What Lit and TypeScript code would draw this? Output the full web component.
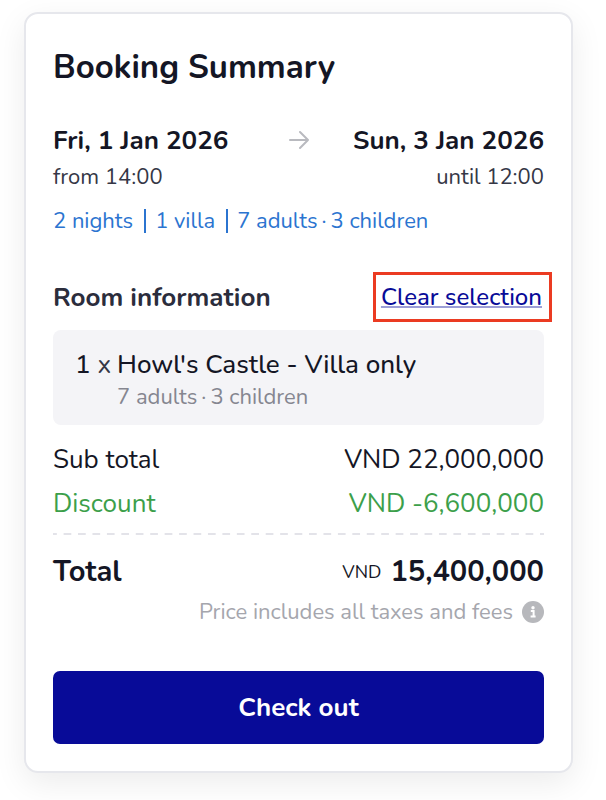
import { LitElement, html, css } from "lit";
import { customElement } from "lit/decorators.js";

@customElement("app-root")
export class AppRoot extends LitElement {
  static styles = css`
    :host {
      display: block;
      box-sizing: border-box;
      min-height: 100vh;
      padding: 12px 33px 27px 24px;
      background: #fff;
      color: #141625;
      font-family: Nunito, "Open Sans", "Noto Sans", sans-serif;
      font-size: 26px;
      line-height: 32px;
      overflow: hidden;
    }
    h1, h2, p, dl, dd, dt { margin: 0; font: inherit; }
    .card {
      padding: 28px 27px 27px;
      border: 2px solid #e6e7ec;
      border-radius: 14px;
      background: #fff;
      box-shadow: 0 10px 32px rgba(0, 0, 0, 0.08);
    }
    .card .title { font-size: 33px; font-weight: 700; line-height: 52px; margin-bottom: 29px; }
    .dates {
      display: grid;
      grid-template-columns: 1fr auto 1fr;
      align-items: start;
      line-height: 36px;
    }
    .dates .day { font-weight: 700; }
    .dates .time { font-size: 22px; color: #353746; }
    .end { text-align: right; }
    .arrow { display: block; width: 20px; height: 34px; }
    .facts {
      display: flex;
      align-items: center;
      gap: 11px;
      margin-top: 10px;
      font-size: 22px;
      color: #2b74d0;
    }
    .fact + .fact { display: flex; align-items: center; gap: 9px; }
    .fact + .fact::before { content: ""; width: 2px; height: 24px; background: currentColor; }
    .dot { margin: 0 4px; }
    .room-head {
      display: flex;
      align-items: center;
      justify-content: space-between;
      margin: 35px -8px 8px 0;
    }
    .room-head .label { padding-top: 2px; font-weight: 700; color: #2b2d3c; }
    .clear {
      height: 50px;
      padding: 0 7px 0 5px;
      border: 3px solid #eb3b22;
      background: none;
      color: #080b98;
      font: inherit;
      font-size: 24px;
      font-weight: 500;
      text-decoration: underline;
      text-decoration-color: #9c9ed6;
      text-decoration-thickness: 2px;
      text-decoration-skip-ink: none;
      text-underline-offset: 1px;
      cursor: pointer;
    }
    .room {
      display: grid;
      grid-template-columns: auto 1fr;
      column-gap: 6px;
      padding: 19px 22px 12px;
      border-radius: 8px;
      background: #f4f4f7;
    }
    .name { font-weight: 500; }
    .times { font-weight: 400; color: #353746; }
    .guests { grid-column: 2; font-size: 22px; color: #858690; }
    .prices { margin-top: 13px; }
    .row {
      display: flex;
      justify-content: space-between;
      align-items: center;
      line-height: 44px;
    }
    .discount { color: #3c9f4a; }
    .rule {
      height: 2px;
      margin: 7px 0 15px;
      background: linear-gradient(90deg, #e3e3e9 4px, transparent 4px calc(100% - 4px), #e3e3e9 calc(100% - 4px));
      background-size: calc(100% / 34) 100%;
    }
    .total { font-size: 29px; font-weight: 700; }
    .amount { display: flex; align-items: center; gap: 9px; }
    .currency { font-size: 18px; font-weight: 400; }
    .note {
      display: flex;
      align-items: center;
      justify-content: flex-end;
      gap: 9px;
      margin: 2px 0 43px;
      font-size: 22px;
      color: #a5a6ad;
    }
    .info { width: 22px; height: 22px; }
    .checkout {
      display: block;
      width: 100%;
      height: 73px;
      padding: 0;
      border: 0;
      border-radius: 7px;
      background: #080b98;
      color: #fff;
      font: inherit;
      font-weight: 700;
      cursor: pointer;
    }
  `;

  render() {
    return html`
      <main class="card">
        <h1 class="title">Booking Summary</h1>
        <section class="dates">
          <div>
            <p class="day">Fri, 1 Jan 2026</p>
            <p class="time">from 14:00</p>
          </div>
          <svg class="arrow" viewBox="0 0 20 34" fill="none" stroke="#b9babf" stroke-width="2" stroke-linecap="round" stroke-linejoin="round" aria-hidden="true">
            <path d="M1 17H19M11 9L19 17L11 25" />
          </svg>
          <div class="end">
            <p class="day">Sun, 3 Jan 2026</p>
            <p class="time">until 12:00</p>
          </div>
        </section>
        <div class="facts">
          <span class="fact">2 nights</span>
          <span class="fact">1 villa</span>
          <span class="fact"><span>7 adults<span class="dot">·</span>3 children</span></span>
        </div>
        <div class="room-head">
          <h2 class="label">Room information</h2>
          <button class="clear" type="button">Clear selection</button>
        </div>
        <section class="room">
          <span class="name">1 <span class="times">x</span></span>
          <span class="name">Howl's Castle - Villa only</span>
          <span class="guests">7 adults<span class="dot">·</span>3 children</span>
        </section>
        <dl class="prices">
          <div class="row"><dt>Sub total</dt><dd>VND 22,000,000</dd></div>
          <div class="row discount"><dt>Discount</dt><dd>VND -6,600,000</dd></div>
          <div class="rule"></div>
          <div class="row total"><dt>Total</dt><dd class="amount"><span class="currency">VND</span><span>15,400,000</span></dd></div>
        </dl>
        <p class="note">
          Price includes all taxes and fees
          <svg class="info" viewBox="0 0 22 22" aria-hidden="true">
            <circle cx="11" cy="11" r="11" fill="#b7b8bc" />
            <circle cx="11" cy="6.8" r="1.7" fill="#fff" />
            <path d="M8.8 10H11.6V15.6M8.6 15.6H13.6" fill="none" stroke="#fff" stroke-width="2" />
          </svg>
        </p>
        <button class="checkout" type="button">Check out</button>
      </main>
    `;
  }
}
